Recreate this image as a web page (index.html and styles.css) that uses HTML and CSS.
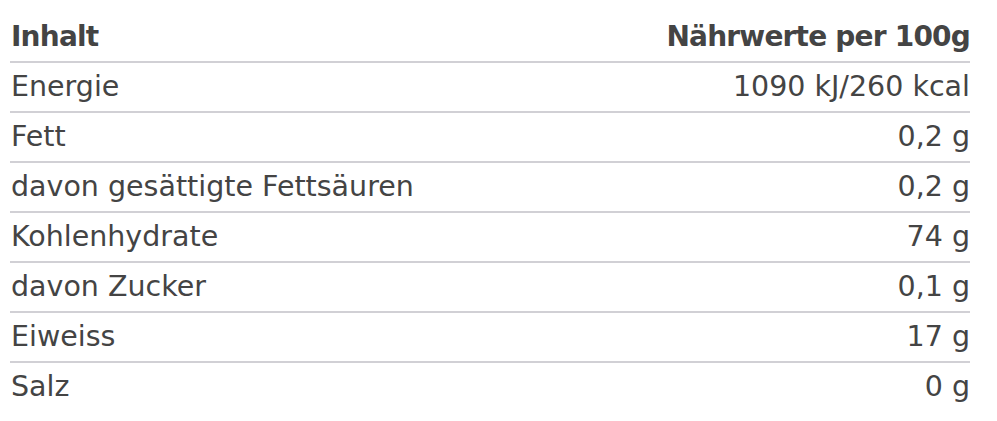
FILE: index.html
```html
<!DOCTYPE html>
<html lang="de">
<head>
<meta charset="utf-8">
<link rel="stylesheet" href="styles.css">
</head>
<body>
<table class="nutrition">
  <thead>
    <tr><th class="label">Inhalt</th><th class="value">Nährwerte per 100g</th></tr>
  </thead>
  <tbody>
    <tr><td class="label">Energie</td><td class="value">1090 kJ/260 kcal</td></tr>
    <tr><td class="label">Fett</td><td class="value">0,2 g</td></tr>
    <tr><td class="label">davon gesättigte Fettsäuren</td><td class="value">0,2 g</td></tr>
    <tr><td class="label">Kohlenhydrate</td><td class="value">74 g</td></tr>
    <tr><td class="label">davon Zucker</td><td class="value">0,1 g</td></tr>
    <tr><td class="label">Eiweiss</td><td class="value">17 g</td></tr>
    <tr><td class="label">Salz</td><td class="value">0 g</td></tr>
  </tbody>
</table>
</body>
</html>
```
FILE: styles.css
```css
html, body { margin: 0; padding: 0; background: #fff; }
body { padding: 13px 27px 0 10px; font-family: "DejaVu Sans", sans-serif; color: #444; }
.nutrition { width: 960px; border-collapse: collapse; font-size: 28.5px; }
.nutrition th, .nutrition td { padding: 0 0 0 1px; height: 48px; line-height: 48px; vertical-align: middle; }
.nutrition th { font-weight: 700; font-size: 28px; letter-spacing: -0.8px; }
.nutrition tbody tr td { border-top: 2px solid #d1d0d5; }
.nutrition .label { text-align: left; }
.nutrition .value { text-align: right; padding-left: 0; }
```
